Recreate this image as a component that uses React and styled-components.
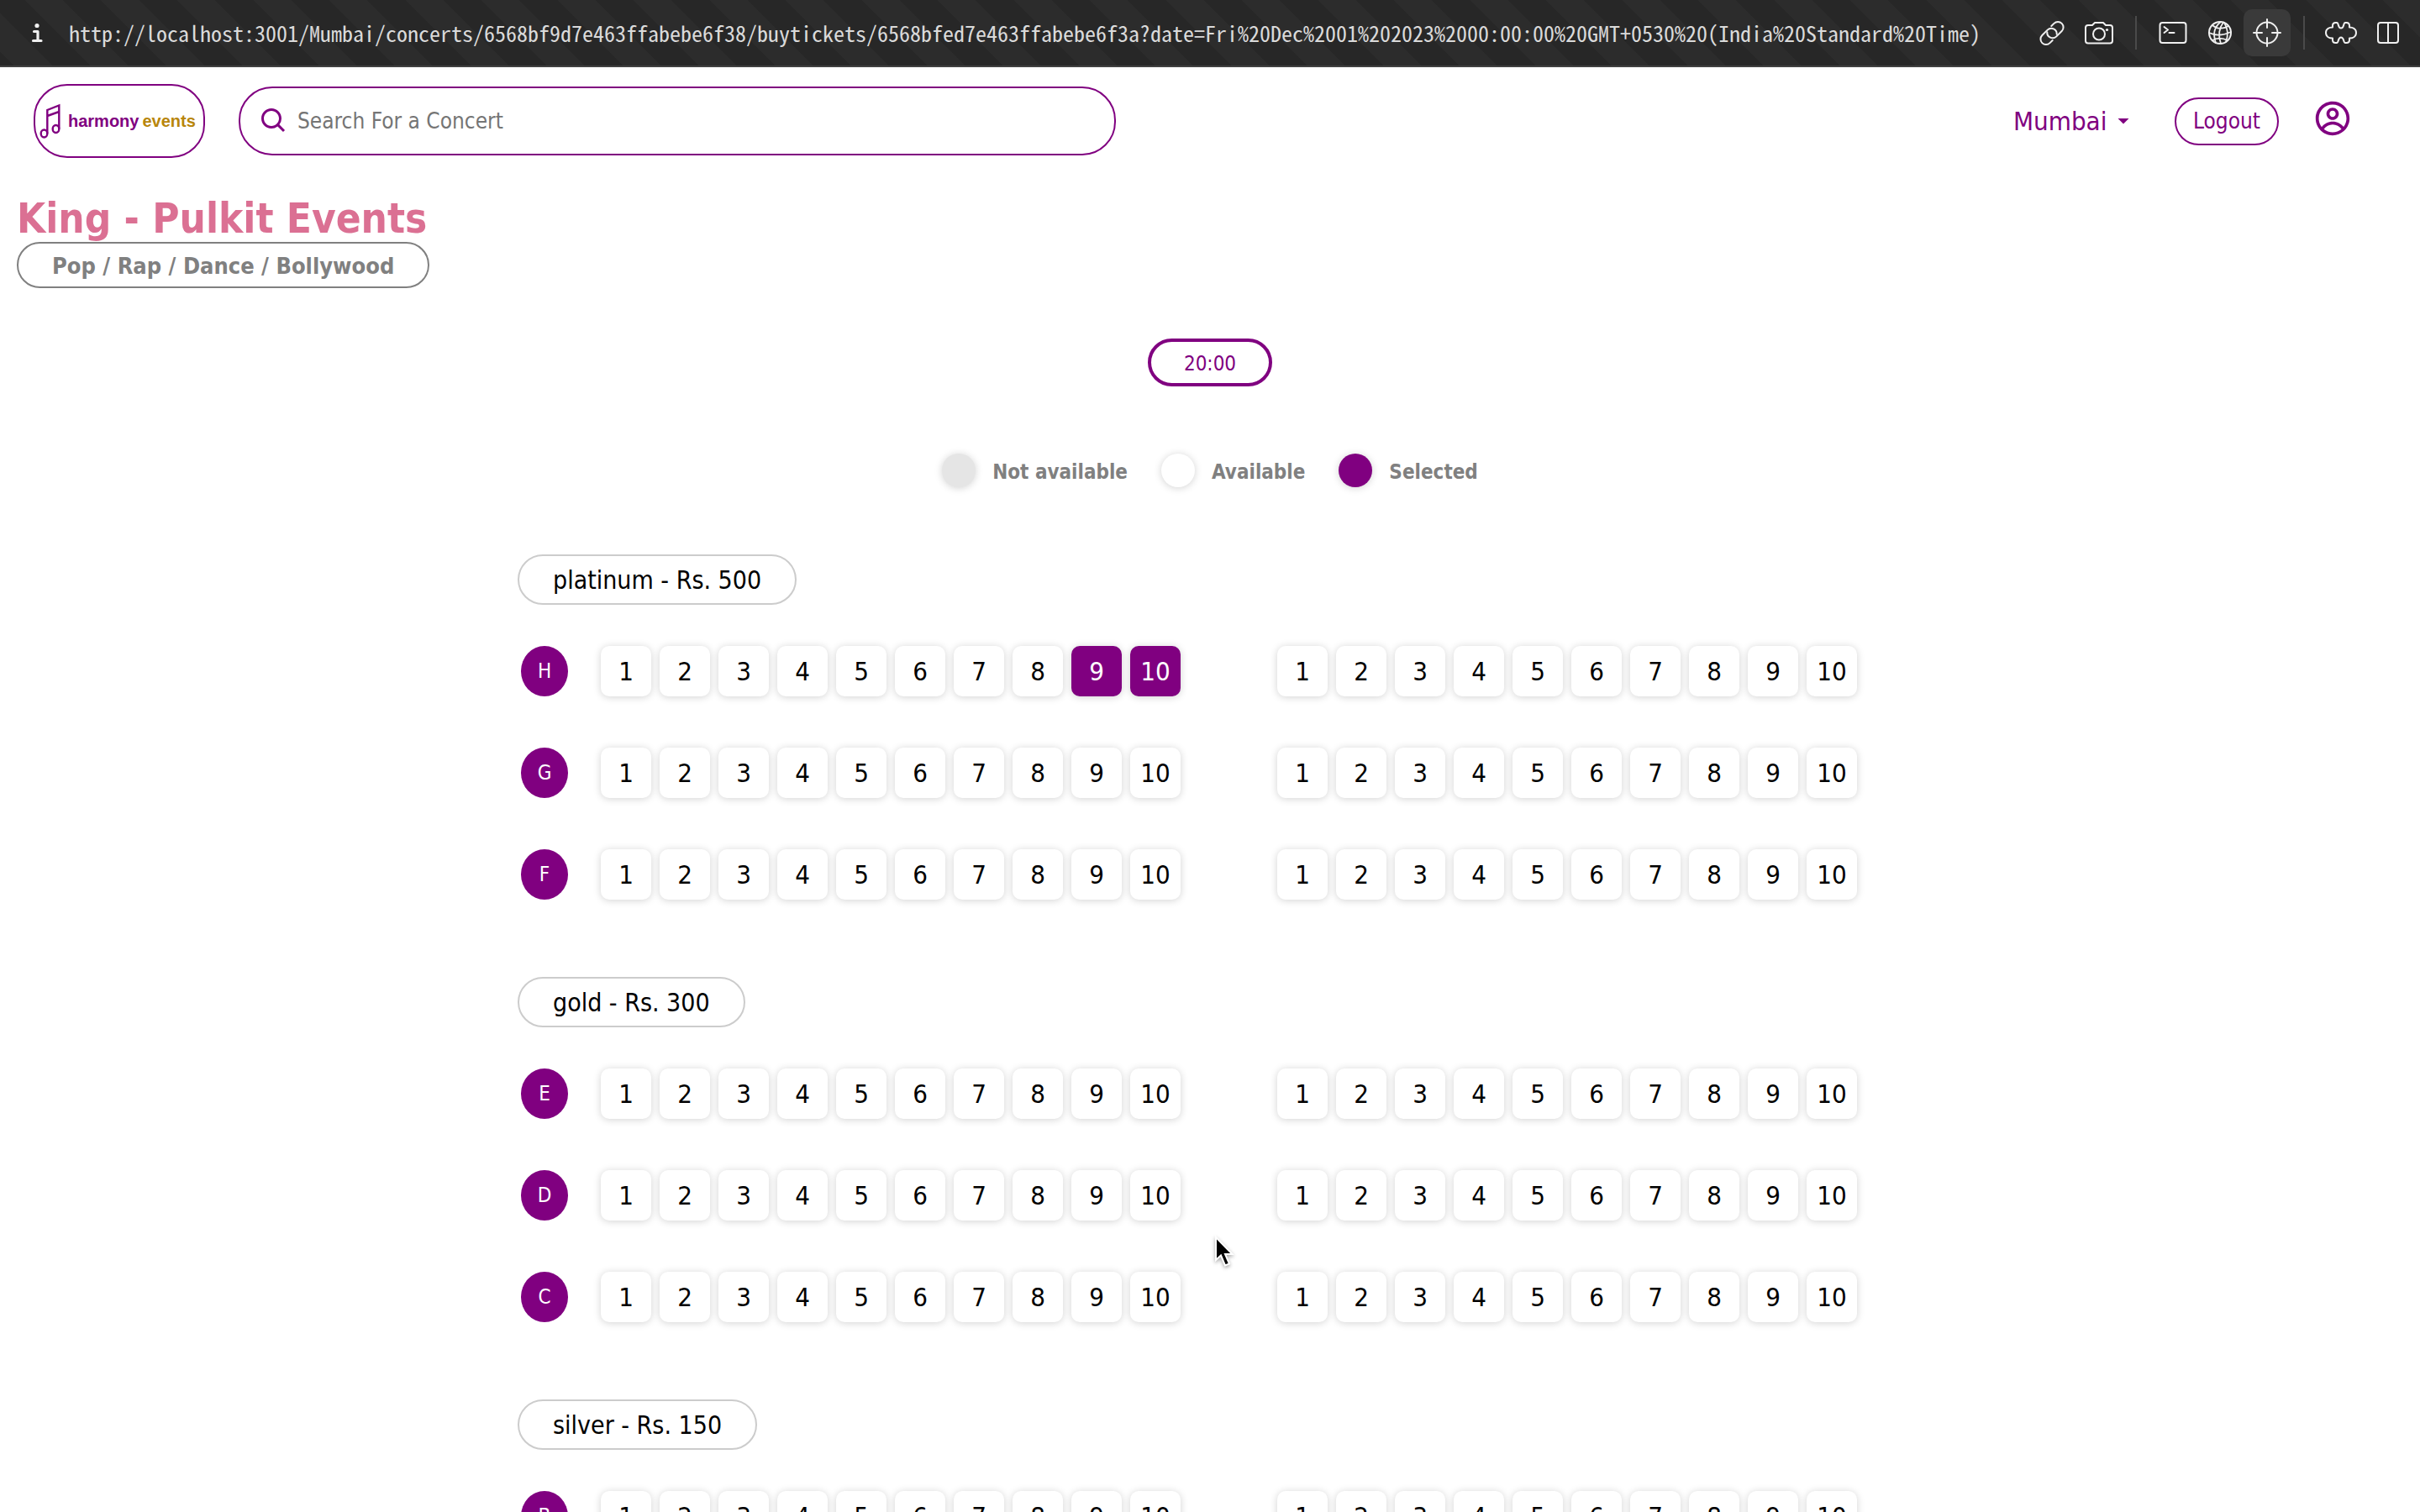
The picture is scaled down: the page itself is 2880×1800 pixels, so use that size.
import React, { useState } from "react";
import styled, { createGlobalStyle } from "styled-components";
import { BiSearch } from "react-icons/bi";
import { CgProfile } from "react-icons/cg";

const GlobalStyle = createGlobalStyle`
  *, *::before, *::after { box-sizing: border-box; }
  body {
    margin: 0;
    background: #fff;
    color: #000;
    font-family: Tahoma, "DejaVu Sans Condensed", "DejaVu Sans", sans-serif;
  }
  button, input, select { font-family: inherit; }
`;

const Page = styled.div`
  position: relative;
  min-height: 100vh;
`;

/* Browser toolbar */

const Toolbar = styled.div`
  display: flex;
  align-items: center;
  height: 80px;
  padding: 0 10px 0 16px;
  border-bottom: 2px solid #404040;
  background: repeating-linear-gradient(
    45deg,
    #272727 0 12px,
    #2c2c2c 12px 44px,
    #272727 44px 64px
  );
`;

const ToolButton = styled.button`
  display: grid;
  place-items: center;
  flex: none;
  width: 56px;
  height: 56px;
  padding: 0;
  border: 0;
  border-radius: 10px;
  color: #f0f0f0;
  background: ${(p) => (p.$active ? "#3a3a3a" : "transparent")};
`;

const Address = styled.div`
  flex: 1;
  min-width: 0;
  padding-left: 10px;
  overflow: hidden;
  white-space: nowrap;
  color: #dadada;
  font: 500 26px/40px "Noto Sans Mono CJK SC", monospace;
`;

const ToolDivider = styled.span`
  flex: none;
  width: 2px;
  height: 40px;
  margin: 0 15px;
  background: #4a4a4a;
`;

function ToolIcon({ children }) {
  return (
    <svg
      width="40"
      height="40"
      viewBox="0 0 40 40"
      fill="none"
      stroke="currentColor"
      strokeWidth="2"
      strokeLinecap="round"
      strokeLinejoin="round"
      aria-hidden="true"
    >
      {children}
    </svg>
  );
}

const InfoIcon = () => (
  <ToolIcon>
    <circle cx="20" cy="11.5" r="2.6" fill="currentColor" stroke="none" />
    <path d="M16.5 18.5H21V29M15.5 29.5H25" strokeWidth="3.2" />
  </ToolIcon>
);

const LinkIcon = () => (
  <ToolIcon>
    <g transform="rotate(-45 20 20.5)">
      <path d="M14.5 27H10a6.5 6.5 0 0 1 0-13h9a6.5 6.5 0 0 1 4.2 11.4" />
      <path d="M25.5 14H30a6.5 6.5 0 0 1 0 13h-9a6.5 6.5 0 0 1-4.2-11.4" />
    </g>
  </ToolIcon>
);

const CameraIcon = () => (
  <ToolIcon>
    <path d="M7 11h5l3-3h10l3 3h5a3 3 0 0 1 3 3v15.5a3 3 0 0 1-3 3H7a3 3 0 0 1-3-3V14a3 3 0 0 1 3-3z" />
    <circle cx="20" cy="21.5" r="7" />
    <circle cx="29.5" cy="16.5" r="1.6" fill="currentColor" stroke="none" />
  </ToolIcon>
);

const TerminalIcon = () => (
  <ToolIcon>
    <rect x="4.5" y="8" width="31" height="24" rx="3" />
    <path d="M9.5 13l4.5 3.5-4.5 3.5M15.5 20h6" />
  </ToolIcon>
);

const GlobeIcon = () => (
  <ToolIcon>
    <circle cx="20" cy="20" r="13" />
    <path d="M21 7c-8 6-10 14-6 25M24 7.5c-6 8-6 17-3 25.5M25 8c5 8 5 15 2 23M7 20c7 3.5 16 3.5 26-1M11 11c5 4.5 11 5.5 19 1M11 29c5-3 12-3 18 0" strokeWidth="1.8" />
  </ToolIcon>
);

const TargetIcon = () => (
  <ToolIcon>
    <circle cx="20" cy="20" r="12.5" />
    <path d="M20 4v10M20 26v10M4 20h10M26 20h10" />
  </ToolIcon>
);

const PuzzleIcon = () => (
  <ToolIcon>
    <path d="M10 11.5q0-3.500 3.500-3.500h1.500c2.500 0 1 6.500 5 6.500s2.500-6.500 5-6.500h1.500q3.500 0 3.500 3.500v2c3.500 0 8 1.500 8 6.500s-4.500 6.500-8 6.500v2q0 3.500-3.500 3.500h-1.500c-2.500 0-1-6.500-5-6.500s-2.500 6.500-5 6.500h-1.500q-3.500 0-3.500-3.500v-2c-3.500 0-8-1.500-8-6.500s4.500-6.500 8-6.500z" />
  </ToolIcon>
);

const SplitIcon = () => (
  <ToolIcon>
    <rect x="8" y="8" width="24" height="24" rx="3" />
    <path d="M20 8v24" />
  </ToolIcon>
);

/* Site header */

const Header = styled.header`
  display: flex;
  align-items: center;
  gap: 40px;
  padding: 20px 82px 20px 40px;
`;

const LogoLink = styled.a`
  display: flex;
  align-items: center;
  gap: 8px;
  width: 204px;
  height: 88px;
  padding: 0 5px;
  border: 2px solid #800080;
  border-radius: 40px;
  color: #800080;
  font: 700 20px/32px "Liberation Sans", Arial, sans-serif;
  text-decoration: none;
  white-space: nowrap;
`;

const LogoMark = styled.svg`
  flex: none;
`;

const LogoAccent = styled.span`
  color: #b8860b;
`;

const LogoWords = styled.span`
  display: flex;
  gap: 4px;
`;

const SearchBox = styled.label`
  display: flex;
  align-items: center;
  flex: 0 1 1044px;
  gap: 10px;
  height: 82px;
  padding: 0 22px;
  border: 2px solid #800080;
  border-radius: 40px;
  color: #800080;
`;

const SearchInput = styled.input`
  flex: 1;
  min-width: 0;
  padding: 0;
  border: 0;
  outline: 0;
  background: transparent;
  color: #000;
  font-size: 26px;
  line-height: 32px;
  &::placeholder { color: #757575; opacity: 1; }
`;

const HeaderActions = styled.div`
  display: flex;
  align-items: center;
  gap: 42px;
  margin-left: auto;
`;

const CityPicker = styled.label`
  display: flex;
  align-items: center;
  gap: 12px;
  margin-right: 12px;
  color: #800080;
`;

const CitySelect = styled.select`
  appearance: none;
  padding: 0;
  border: 0;
  background: transparent;
  color: inherit;
  font-size: 31px;
  line-height: 40px;
`;

const LogoutButton = styled.button`
  height: 57px;
  padding: 0 20px;
  border: 2px solid #800080;
  border-radius: 30px;
  background: #fff;
  color: #800080;
  font-size: 26px;
  line-height: 32px;
`;

const ProfileButton = styled.button`
  display: flex;
  padding: 0 0 6px;
  border: 0;
  background: transparent;
  color: #800080;
`;

/* Booking page */

const Intro = styled.section`
  display: flex;
  flex-direction: column;
  align-items: flex-start;
  padding: 26px 20px 60px;
`;

const Title = styled.h1`
  margin: 0;
  color: #db7093;
  font-size: 49px;
  line-height: 54px;
`;

const Genres = styled.p`
  margin: 0;
  padding: 10px 40px 8px;
  border: 2px solid #808080;
  border-radius: 30px;
  color: #808080;
  font-size: 27px;
  font-weight: 700;
  line-height: 33px;
`;

const Booking = styled.main`
  display: flex;
  flex-direction: column;
  align-items: center;
  gap: 80px;
`;

const TimeButton = styled.button`
  width: 148px;
  height: 57px;
  padding: 2px 0 0;
  border: 4px solid #800080;
  border-radius: 30px;
  background: #fff;
  color: #800080;
  font-size: 24px;
  line-height: 30px;
`;

const Legend = styled.ul`
  display: flex;
  gap: 40px;
  margin: 0;
  padding: 0;
  list-style: none;
`;

const LegendItem = styled.li`
  display: flex;
  align-items: center;
  gap: 20px;
  height: 40px;
  color: #808080;
  font-size: 24px;
  font-weight: 700;
  line-height: 30px;
`;

const LegendLabel = styled.span`
  padding-top: 3px;
`;

const LegendDot = styled.span`
  width: 40px;
  height: 40px;
  border-radius: 50%;
  background: ${(p) => p.$color};
  box-shadow: 0 1px 10px rgba(0, 0, 0, 0.18);
`;

const Categories = styled.div`
  display: flex;
  flex-direction: column;
  gap: 92px;
  width: 1648px;
  max-width: 100%;
`;

const Category = styled.section`
  display: flex;
  flex-direction: column;
  align-items: flex-start;
  gap: 49px;
`;

const CategoryName = styled.h2`
  margin: 0;
  padding: 11px 40px 9px;
  border: 2px solid #ccc;
  border-radius: 30px;
  font-size: 30px;
  font-weight: 400;
  line-height: 36px;
`;

const Rows = styled.div`
  display: flex;
  flex-direction: column;
  gap: 61px;
  padding-left: 4px;
`;

const SeatRow = styled.div`
  display: flex;
  align-items: center;
`;

const RowLetter = styled.span`
  display: grid;
  place-items: center;
  width: 56px;
  height: 60px;
  margin-right: 39px;
  border-radius: 50%;
  background: #800080;
  color: #fff;
  font-size: 24px;
  line-height: 30px;
`;

const SeatBlock = styled.div`
  display: flex;
  gap: 10px;
  & + & { margin-left: 115px; }
`;

const Seat = styled.button`
  width: 60px;
  height: 60px;
  padding: 0;
  border: 0;
  border-radius: 10px;
  background: ${(p) => (p.$selected ? "#800080" : "#fff")};
  color: ${(p) => (p.$selected ? "#fff" : "#000")};
  box-shadow: 0 1px 10px rgba(0, 0, 0, 0.18);
  font-size: 31px;
  line-height: 40px;
`;

const Pointer = styled.svg`
  position: absolute;
  top: 1470px;
  left: calc(50% + 4px);
  pointer-events: none;
  filter: drop-shadow(0 2px 2px rgba(0, 0, 0, 0.35));
`;

const URL_TEXT =
  "http://localhost:3001/Mumbai/concerts/6568bf9d7e463ffabebe6f38/buytickets/6568bfed7e463ffabebe6f3a?date=Fri%20Dec%2001%202023%2000:00:00%20GMT+0530%20(India%20Standard%20Time)";

const CATEGORIES = [
  { name: "platinum", price: 500, rows: ["H", "G", "F"] },
  { name: "gold", price: 300, rows: ["E", "D", "C"] },
  { name: "silver", price: 150, rows: ["B"] },
];

const LEGEND = [
  { label: "Not available", color: "#e5e5e5" },
  { label: "Available", color: "#fff" },
  { label: "Selected", color: "#800080" },
];

const BLOCKS = ["left", "right"];
const SEATS = [1, 2, 3, 4, 5, 6, 7, 8, 9, 10];

export default function App() {
  const [selected, setSelected] = useState(["H-left-9", "H-left-10"]);

  const toggle = (id) =>
    setSelected((list) =>
      list.includes(id) ? list.filter((s) => s !== id) : [...list, id]
    );

  return (
    <Page>
      <GlobalStyle />
      <Toolbar>
        <ToolButton aria-label="Page info"><InfoIcon /></ToolButton>
        <Address>{URL_TEXT}</Address>
        <ToolButton aria-label="Copy link"><LinkIcon /></ToolButton>
        <ToolButton aria-label="Capture"><CameraIcon /></ToolButton>
        <ToolDivider />
        <ToolButton aria-label="Console"><TerminalIcon /></ToolButton>
        <ToolButton aria-label="Network"><GlobeIcon /></ToolButton>
        <ToolButton aria-label="Inspect" $active><TargetIcon /></ToolButton>
        <ToolDivider />
        <ToolButton aria-label="Extensions"><PuzzleIcon /></ToolButton>
        <ToolButton aria-label="Split view"><SplitIcon /></ToolButton>
      </Toolbar>

      <Header>
        <LogoLink href="#home">
          <LogoMark width="26" height="42" viewBox="0 0 26 42" fill="none" stroke="currentColor" strokeWidth="2.4" aria-hidden="true">
            <ellipse cx="5.500" cy="36" rx="3.800" ry="4.500" />
            <ellipse cx="19.500" cy="30.500" rx="3.800" ry="4.500" />
            <path d="M9.300 36V8L23.300 2.500v28M9.300 15l14-5" />
          </LogoMark>
          <LogoWords>
            <span>harmony</span>
            <LogoAccent>events</LogoAccent>
          </LogoWords>
        </LogoLink>
        <SearchBox>
          <BiSearch size={36} aria-hidden="true" />
          <SearchInput type="text" placeholder="Search For a Concert" aria-label="Search For a Concert" />
        </SearchBox>
        <HeaderActions>
          <CityPicker>
            <CitySelect aria-label="City" defaultValue="Mumbai">
              <option>Mumbai</option>
              <option>Delhi</option>
              <option>Pune</option>
            </CitySelect>
            <svg width="14" height="8" viewBox="0 0 14 8" aria-hidden="true">
              <path d="M0.5 1h13L7 7.5z" fill="currentColor" />
            </svg>
          </CityPicker>
          <LogoutButton>Logout</LogoutButton>
          <ProfileButton aria-label="Profile"><CgProfile size={44} /></ProfileButton>
        </HeaderActions>
      </Header>

      <Intro>
        <Title>King - Pulkit Events</Title>
        <Genres>Pop / Rap / Dance / Bollywood</Genres>
      </Intro>

      <Booking>
        <TimeButton>20:00</TimeButton>
        <Legend>
          {LEGEND.map((item) => (
            <LegendItem key={item.label}>
              <LegendDot $color={item.color} />
              <LegendLabel>{item.label}</LegendLabel>
            </LegendItem>
          ))}
        </Legend>
        <Categories>
          {CATEGORIES.map((category) => (
            <Category key={category.name}>
              <CategoryName>{`${category.name} - Rs. ${category.price}`}</CategoryName>
              <Rows>
                {category.rows.map((row) => (
                  <SeatRow key={row}>
                    <RowLetter>{row}</RowLetter>
                    {BLOCKS.map((block) => (
                      <SeatBlock key={block}>
                        {SEATS.map((n) => {
                          const id = `${row}-${block}-${n}`;
                          const isSelected = selected.includes(id);
                          return (
                            <Seat
                              key={id}
                              $selected={isSelected}
                              aria-pressed={isSelected}
                              onClick={() => toggle(id)}
                            >
                              {n}
                            </Seat>
                          );
                        })}
                      </SeatBlock>
                    ))}
                  </SeatRow>
                ))}
              </Rows>
            </Category>
          ))}
        </Categories>
      </Booking>

      <Pointer width="26" height="40" viewBox="0 0 26 40" aria-hidden="true">
        <path d="M3 3v27l6-5.5 5 12 5-2-5-11.5h8.500z" fill="#000" stroke="#fff" strokeWidth="2" />
      </Pointer>
    </Page>
  );
}
